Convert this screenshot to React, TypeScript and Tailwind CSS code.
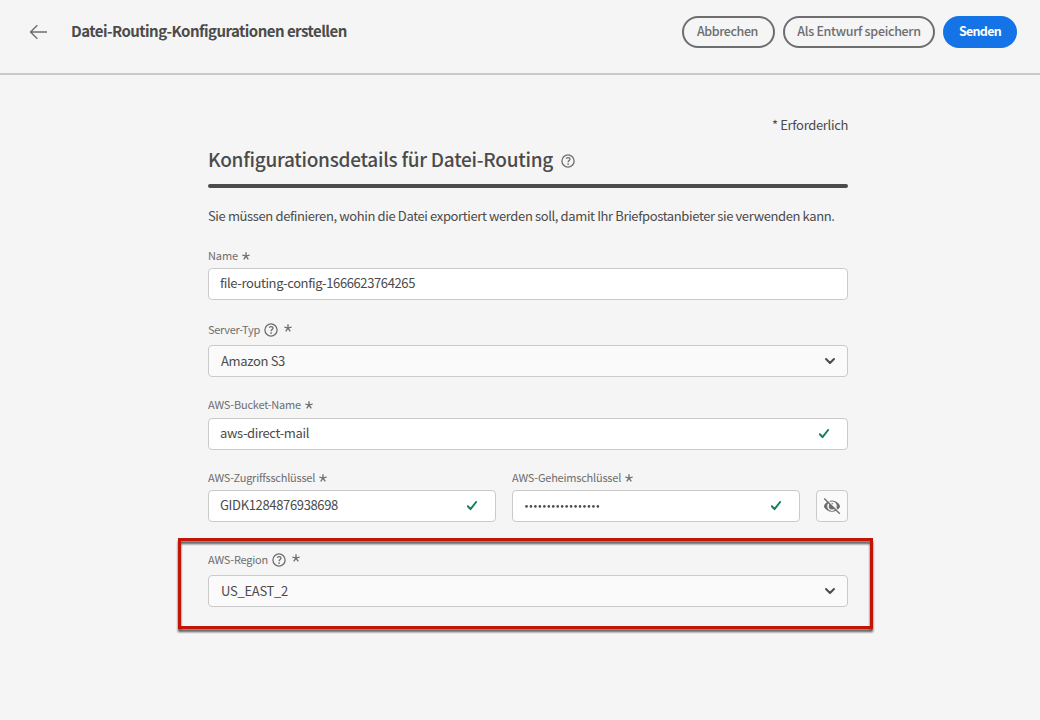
import React from "react";

const asteriskAngles = [0, 72, 144, 216, 288];

function Asterisk({ className = "" }: { className?: string }) {
  return (
    <svg viewBox="0 0 8 8" className={`h-2 w-2 shrink-0 ${className}`} stroke="#6b6b6b" strokeWidth="1.3">
      {asteriskAngles.map((a) => (
        <line key={a} x1="4" y1="4.2" x2="4" y2="0.3" transform={`rotate(${a} 4 4.2)`} />
      ))}
    </svg>
  );
}

function Help({ className = "" }: { className?: string }) {
  return (
    <svg viewBox="0 0 14 14" className={`h-3.5 w-3.5 shrink-0 ${className}`} fill="none" stroke="#6e6e6e">
      <circle cx="7" cy="7" r="6.1" strokeWidth="1.3" />
      <path d="M5.1 4.4C5.8 3.8 6.5 3.6 7.2 3.6C8.3 3.6 9 4.3 9 5.1C9 6.5 7.1 6.6 7.1 8.3" strokeWidth="1.3" />
      <circle cx="7.1" cy="10.1" r="0.9" fill="#6e6e6e" stroke="none" />
    </svg>
  );
}

function Check() {
  return (
    <svg viewBox="0 0 12 10" className="mb-px h-2.5 w-3 shrink-0" fill="none">
      <path d="M1.9 5.3L4.5 8.1L10.1 1" stroke="#12805c" strokeWidth="2" strokeLinecap="round" strokeLinejoin="round" />
    </svg>
  );
}

function Chevron() {
  return (
    <svg viewBox="0 0 12 8" className="h-2 w-3 shrink-0" fill="none">
      <path d="M2 2L6 6L10 2" stroke="#4b4b4b" strokeWidth="2" strokeLinecap="round" strokeLinejoin="round" />
    </svg>
  );
}

function EyeOff() {
  return (
    <svg viewBox="0 0 18 18" className="h-[18px] w-[18px] shrink-0">
      <path
        fillRule="evenodd"
        fill="#6e6e6e"
        d="M9 3.4C4.6 3.4 1 7.2 1 9.2C1 11.2 4.6 14.8 9 14.8C13.4 14.8 17 11.2 17 9.2C17 7.2 13.4 3.4 9 3.4ZM9 4.4A4.8 4.8 0 1 1 9 14A4.8 4.8 0 1 1 9 4.4Z"
      />
      <path fill="#6e6e6e" d="M9 6.1A3.2 3.2 0 1 0 12.2 9.3A1.5 1.5 0 0 1 9.6 7.9A1.5 1.5 0 0 1 10.2 6.4A3.2 3.2 0 0 0 9 6.1Z" />
      <path d="M2.4 1.2L17.6 16.2" stroke="#fafafa" strokeWidth="1.2" />
      <path d="M1.2 1.5L16.8 16.7" stroke="#6e6e6e" strokeWidth="1.4" />
    </svg>
  );
}

function Label({ text, className = "tracking-[-0.22px]", help = false }: { text: string; className?: string; help?: boolean }) {
  return (
    <div className="flex h-4 items-center text-[11px] leading-4 text-[#6e6e6e]">
      <span className={`whitespace-nowrap ${className}`}>{text}</span>
      {help && <Help className="mt-0.5 ml-1" />}
      <Asterisk className={help ? "mb-0.5 ml-1.5" : "mt-0.5 ml-1"} />
    </div>
  );
}

function Field({ text, className, valid = false }: { text: string; className: string; valid?: boolean }) {
  return (
    <div className="flex h-8 items-center justify-between rounded border border-[#cacaca] bg-white pr-[17px] pl-[11px] text-[13px] leading-4 text-[#4b4b4b]">
      <span className={`mb-[3px] whitespace-nowrap ${className}`}>{text}</span>
      {valid && <Check />}
    </div>
  );
}

function SelectField({ text, className }: { text: string; className: string }) {
  return (
    <div className="flex h-8 items-center justify-between rounded border border-[#cacaca] bg-[#fafafa] pr-[11px] pl-3 text-[13px] leading-4 text-[#4b4b4b]">
      <span className={`mb-px whitespace-nowrap ${className}`}>{text}</span>
      <Chevron />
    </div>
  );
}

export default function App() {
  return (
    <div className="h-[720px] overflow-hidden bg-[#f5f5f5] font-['Noto_Sans_CJK_SC','Noto_Sans',sans-serif] text-[#4b4b4b]">
      <header className="flex h-[75px] items-start border-b-2 border-[#cacaca] pt-4 pr-[23px] pl-[29px]">
        <svg viewBox="0 0 20 16" className="mt-2 h-4 w-5 shrink-0" fill="none" stroke="#6e6e6e" strokeWidth="1.4">
          <path d="M1.5 8H18M8.3 1.2L1.5 8L8.3 14.8" />
        </svg>
        <h1 className="ml-[22px] pt-1 text-[15px] leading-[22px] font-bold tracking-[-0.54px] whitespace-nowrap">
          Datei-Routing-Konfigurationen erstellen
        </h1>
        <div className="ml-auto flex gap-2 text-[12.5px] leading-4 whitespace-nowrap">
          <button className="h-8 w-[93px] rounded-full border-2 border-[#6e6e6e] pr-[2px] pb-[3px] font-medium tracking-[-0.4px] text-[#6e6e6e]">
            Abbrechen
          </button>
          <button className="h-8 w-[152px] rounded-full border-2 border-[#6e6e6e] pb-[3px] font-medium tracking-[-0.3px] text-[#6e6e6e]">
            Als Entwurf speichern
          </button>
          <button className="h-8 w-[74px] rounded-full bg-[#1473e6] pb-[3px] font-bold tracking-[-0.7px] text-white">
            Senden
          </button>
        </div>
      </header>

      <main className="ml-[208px] w-[640px] pt-[42px]">
        <p className="text-right text-[13px] leading-4 tracking-[-0.33px]">* Erforderlich</p>
        <div className="mt-3.5 flex h-6 items-center">
          <h2 className="text-[19px] leading-6 font-medium tracking-[-0.265px] whitespace-nowrap">
            Konfigurationsdetails für Datei-Routing
          </h2>
          <Help className="mt-1 ml-2" />
        </div>
        <div className="mt-[13px] h-1 rounded-full bg-[#4b4b4b]" />
        <p className="mt-5 text-[13px] leading-4 tracking-[-0.375px] whitespace-nowrap">
          Sie müssen definieren, wohin die Datei exportiert werden soll, damit Ihr Briefpostanbieter sie verwenden kann.
        </p>

        <div className="mt-[23px] flex flex-col gap-[5px]">
          <Label text="Name" className="tracking-[-0.1px]" />
          <Field text="file-routing-config-1666623764265" className="tracking-[-0.39px]" />
        </div>
        <div className="mt-[21px] flex flex-col gap-2">
          <Label text="Server-Typ" className="tracking-[-0.3px]" help />
          <SelectField text="Amazon S3" className="tracking-[-0.33px]" />
        </div>
        <div className="mt-[19px] flex flex-col gap-1.5">
          <Label text="AWS-Bucket-Name" />
          <Field text="aws-direct-mail" className="tracking-[-0.36px]" valid />
        </div>
        <div className="mt-[19px] flex items-end gap-4">
          <div className="flex w-[288px] flex-col gap-[5px]">
            <Label text="AWS-Zugriffsschlüssel" className="tracking-[-0.24px]" />
            <Field text="GIDK1284876938698" className="tracking-[-0.35px]" valid />
          </div>
          <div className="flex w-[288px] flex-col gap-[5px]">
            <Label text="AWS-Geheimschlüssel" />
            <div className="flex h-8 items-center justify-between rounded border border-[#cacaca] bg-white pr-[17px] pl-3">
              <svg viewBox="0 0 76 4" className="h-1 w-[76px]" fill="#4b4b4b">
                {Array.from({ length: 17 }, (_, i) => (
                  <circle key={i} cx={1.5 + i * 4.46} cy="2.4" r="1.3" />
                ))}
              </svg>
              <Check />
            </div>
          </div>
          <button className="flex h-8 w-8 items-center justify-center rounded border border-[#cacaca] bg-[#fafafa]">
            <EyeOff />
          </button>
        </div>

        <div className="relative mt-[29px] flex flex-col gap-2">
          <div className="pointer-events-none absolute -top-[13px] -left-[30px] h-[91px] w-[695px] border-3 border-[#c01507] drop-shadow-[0_3px_1px_rgba(0,0,0,0.65)]" />
          <Label text="AWS-Region" help />
          <SelectField text="US_EAST_2" className="tracking-[-0.28px]" />
        </div>
      </main>
    </div>
  );
}
